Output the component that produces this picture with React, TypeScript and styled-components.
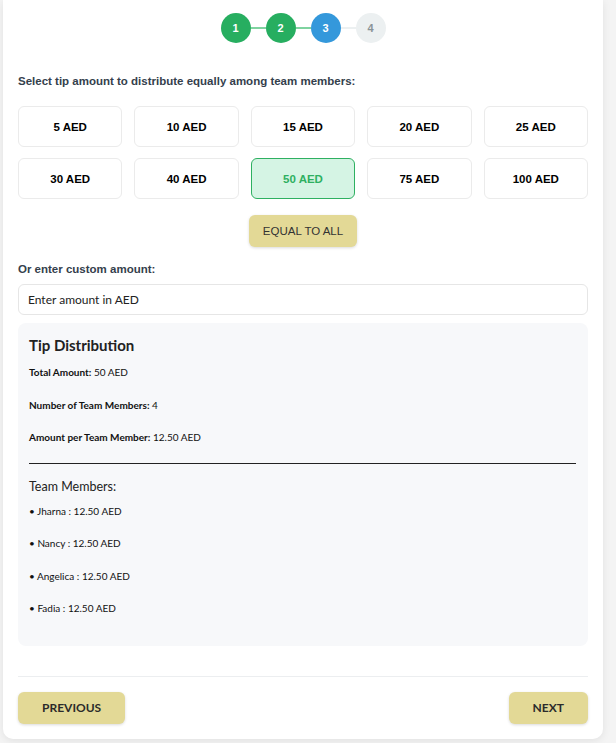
import React, { useState } from 'react';
import styled, { createGlobalStyle } from 'styled-components';

const GlobalStyle = createGlobalStyle`
    html, body {
        margin: 0;
        padding: 0;
        background: #f4f4f4;
    }
    * {
        box-sizing: border-box;
    }
`;

const AMOUNTS = [5, 10, 15, 20, 25, 30, 40, 50, 75, 100];
const MEMBERS = ['Jharna', 'Nancy', 'Angelica', 'Fadia'];
const STEPS = [
    { n: 1, state: 'done' },
    { n: 2, state: 'done' },
    { n: 3, state: 'active' },
    { n: 4, state: 'todo' },
] as const;

type StepState = 'done' | 'active' | 'todo';

export default function App() {
    const [selected, setSelected] = useState(50);
    const [custom, setCustom] = useState('');

    const total = custom ? Number(custom) || 0 : selected;
    const perMember = (total / MEMBERS.length).toFixed(2);

    return (
        <>
            <GlobalStyle />
            <Page>
                <Card>
                    <Stepper>
                        {STEPS.map((s, i) => (
                            <React.Fragment key={s.n}>
                                {i > 0 && <Connector $done={s.state !== 'todo'} />}
                                <StepCircle $state={s.state}>{s.n}</StepCircle>
                            </React.Fragment>
                        ))}
                    </Stepper>

                    <Label>Select tip amount to distribute equally among team members:</Label>
                    <AmountGrid>
                        {AMOUNTS.map(a => (
                            <AmountButton
                                key={a}
                                $selected={!custom && a === selected}
                                onClick={() => { setSelected(a); setCustom(''); }}
                            >
                                {a} AED
                            </AmountButton>
                        ))}
                    </AmountGrid>

                    <CenterRow>
                        <ActionButton>EQUAL TO ALL</ActionButton>
                    </CenterRow>

                    <Label $small>Or enter custom amount:</Label>
                    <AmountInput
                        placeholder="Enter amount in AED"
                        value={custom}
                        onChange={e => setCustom(e.target.value)}
                    />

                    <Distribution>
                        <DistTitle>Tip Distribution</DistTitle>
                        <DistLine><b>Total Amount:</b> {total} AED</DistLine>
                        <DistLine><b>Number of Team Members:</b> {MEMBERS.length}</DistLine>
                        <DistLine><b>Amount per Team Member:</b> {perMember} AED</DistLine>
                        <Rule />
                        <MembersTitle>Team Members:</MembersTitle>
                        {MEMBERS.map(m => (
                            <DistLine key={m}>• {m} : {perMember} AED</DistLine>
                        ))}
                    </Distribution>

                    <Footer>
                        <NavButton>PREVIOUS</NavButton>
                        <NavButton>NEXT</NavButton>
                    </Footer>
                </Card>
            </Page>
        </>
    );
}

const Page = styled.div`
    width: 616px;
    min-height: 743px;
    padding: 0 13px 0 3px;
`;

const Card = styled.div`
    width: 600px;
    background: #fff;
    border-radius: 0 0 10px 10px;
    box-shadow: 0 2px 8px rgba(0, 0, 0, 0.08);
    padding: 13px 15px 15px;
`;

const Stepper = styled.div`
    display: flex;
    align-items: center;
    justify-content: center;
`;

const StepCircle = styled.div<{ $state: StepState }>`
    width: 30px;
    height: 30px;
    border-radius: 50%;
    display: flex;
    align-items: center;
    justify-content: center;
    font-family: "Liberation Sans", Arial, sans-serif;
    font-size: 11px;
    font-weight: 700;
    background: ${p => p.$state === 'done' ? '#27ae60' : p.$state === 'active' ? '#3498db' : '#ecf0f1'};
    color: ${p => p.$state === 'todo' ? '#8a9397' : '#fff'};
`;

const Connector = styled.div<{ $done: boolean }>`
    width: 15px;
    height: 2px;
    background: ${p => p.$done ? '#7fd3a0' : '#ecf0f1'};
`;

const Label = styled.div<{ $small?: boolean }>`
    margin-top: ${p => p.$small ? '15px' : '31px'};
    font-family: "Liberation Sans", Arial, sans-serif;
    font-size: 11.5px;
    font-weight: 700;
    line-height: 14px;
    color: #34404c;
`;

const AmountGrid = styled.div`
    margin-top: 18px;
    display: grid;
    grid-template-columns: repeat(5, 1fr);
    gap: 11px 12px;
`;

const AmountButton = styled.button<{ $selected: boolean }>`
    height: 41px;
    border-radius: 6px;
    border: 1px solid ${p => p.$selected ? '#2eb061' : '#ebebeb'};
    background: ${p => p.$selected ? '#d5f4e4' : '#fff'};
    color: ${p => p.$selected ? '#2eb061' : '#000'};
    font-family: "Liberation Sans", Arial, sans-serif;
    font-size: 11.5px;
    font-weight: 700;
    cursor: pointer;
    padding: 0;
`;

const CenterRow = styled.div`
    margin-top: 16px;
    display: flex;
    justify-content: center;
`;

const ActionButton = styled.button`
    height: 32px;
    padding: 0 14px;
    border: none;
    border-radius: 6px;
    background: #e3d996;
    color: #333;
    font-family: "Liberation Sans", Arial, sans-serif;
    font-size: 11.5px;
    font-weight: 500;
    box-shadow: 0 1px 3px rgba(0, 0, 0, 0.15);
    cursor: pointer;
`;

const AmountInput = styled.input`
    display: block;
    width: 100%;
    height: 31px;
    margin-top: 8px;
    padding: 0 9px;
    border: 1px solid #e6e6e6;
    border-radius: 6px;
    font-family: Lato, "Noto Sans", sans-serif;
    font-size: 12px;
    color: #222;
    outline: none;

    &::placeholder {
        color: #222;
    }
`;

const Distribution = styled.div`
    margin-top: 8px;
    background: #f7f8fa;
    border-radius: 8px;
    padding: 13px 12px 12px 11px;
    font-family: Lato, "Noto Sans", sans-serif;
    color: #111;
`;

const DistTitle = styled.h3`
    margin: 0 0 11px;
    font-size: 15px;
    font-weight: 700;
    line-height: 18px;
    color: #222;
`;

const DistLine = styled.p`
    margin: 0;
    font-size: 10px;
    line-height: 14px;
    height: 32.5px;
    color: #111;

    b {
        font-weight: 700;
    }
`;

const Rule = styled.hr`
    margin: 0 0 15px;
    border: none;
    border-top: 1px solid #222;
`;

const MembersTitle = styled.h4`
    margin: 0 0 9px;
    font-size: 12.5px;
    font-weight: 400;
    line-height: 16px;
    color: #222;
`;

const Footer = styled.div`
    margin-top: 30px;
    padding-top: 15px;
    border-top: 1px solid #eceef0;
    display: flex;
    justify-content: space-between;
`;

const NavButton = styled.button`
    height: 32px;
    padding: 0 24px;
    border: none;
    border-radius: 6px;
    background: #e3d996;
    color: #2b2b2b;
    font-family: Lato, "Noto Sans", sans-serif;
    font-size: 12px;
    font-weight: 700;
    box-shadow: 0 1px 3px rgba(0, 0, 0, 0.15);
    cursor: pointer;
`;
